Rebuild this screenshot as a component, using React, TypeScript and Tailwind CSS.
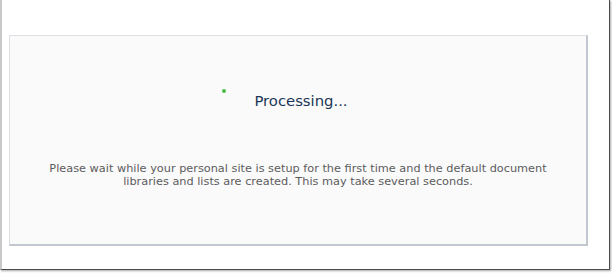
export default function App() {
  return (
    <div className="w-[612px] h-[273px] bg-white">
      {/* Screenshot frame */}
      <div className="w-[610px] h-[270px] bg-white border-l-2 border-[#c9c9c9] border-r border-b border-r-[#4a4a4a] border-b-[#4a4a4a] shadow-[1px_1px_2px_rgba(0,0,0,0.35)] pt-[35px] pl-[7px]">
        {/* Panel */}
        <div className="w-[579px] h-[211px] bg-[#fafafb] border border-[#dcdee3] border-r-2 border-b-2 border-r-[#c3c7cf] border-b-[#c3c7cf] flex flex-col items-center font-['DejaVu_Sans',Verdana,sans-serif]">
          <div className="relative mt-[56px] ml-[6px]">
            <span className="absolute left-[-32px] top-[-3px] w-[4px] h-[4px] rounded-full bg-[#4cbb4c]" />
            <p className="text-[14.8px] leading-[18px] text-[#1b3656]">Processing...</p>
          </div>
          <p className="mt-[52px] text-center text-[11.3px] leading-[13px] text-[#5c5c5c]">
            Please wait while your personal site is setup for the first time and the default document
            <br />
            libraries and lists are created. This may take several seconds.
          </p>
        </div>
      </div>
    </div>
  );
}
